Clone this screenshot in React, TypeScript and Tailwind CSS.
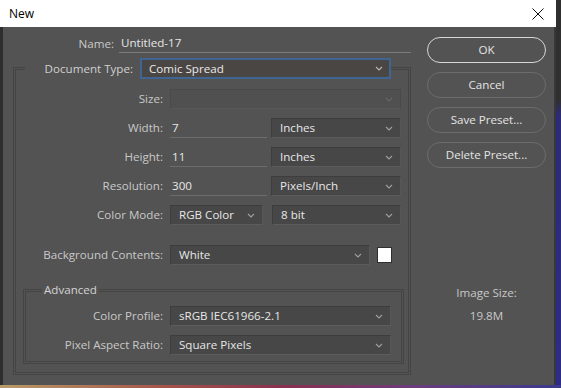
import React from "react";

function Chevron({ c = "#a0a0a0" }: { c?: string }) {
  return (
    <svg width="8" height="5" viewBox="0 0 8 5" className="shrink-0">
      <path d="M1 1 L4 4 L7 1" fill="none" stroke={c} strokeWidth="1.1" />
    </svg>
  );
}

function Select({ value, cls }: { value: string; cls: string }) {
  return (
    <div
      className={`flex h-[20px] items-center justify-between border border-[#3d3d3d] border-b-[#5c5c5c] border-r-[#575757] bg-[#474747] pl-[8px] pr-[7px] text-[#e6e6e6] ${cls}`}
    >
      <span className="whitespace-nowrap leading-none">{value}</span>
      <Chevron />
    </div>
  );
}

function Label({ text, cls }: { text: string; cls: string }) {
  return <span className={`shrink-0 whitespace-nowrap text-right text-[#c8c8c8] ${cls}`}>{text}</span>;
}

function Btn({ text, def }: { text: string; def?: boolean }) {
  return (
    <div
      className={`flex h-[26px] w-[119px] items-center justify-center rounded-full text-[#e4e4e4] ${
        def ? "border-[1.5px] border-[#d6d6d6]" : "border border-[#6c6c6c]"
      }`}
    >
      {text}
    </div>
  );
}

export default function App() {
  return (
    <div className="flex h-[388px] w-[561px] flex-col overflow-hidden font-['Open_Sans',sans-serif] text-[11.6px] leading-[16px]">
      <div className="flex h-[385px]">
        <div className="flex w-[556px] flex-col">
          {/* title bar */}
          <div className="flex h-[27px] items-center justify-between bg-white pl-[9px] pr-[12px] text-black">
            <span className="text-[12px]">New</span>
            <svg width="12" height="12" viewBox="0 0 12 12">
              <path d="M0.5 0.5 L11.5 11.5 M11.5 0.5 L0.5 11.5" stroke="#111" strokeWidth="1" />
            </svg>
          </div>
          {/* body */}
          <div className="flex flex-1 border-l-[3px] border-r-[2px] border-l-[#2e2e2e] border-r-[#383838] bg-[#535353]">
            {/* left column */}
            <div className="flex w-[408px] flex-col pt-[7px]">
              <div className="flex h-[19px] items-center gap-[5px]">
                <Label text="Name:" cls="w-[111px]" />
                <div className="flex h-[19px] w-[293px] items-center border-b border-[#7c7c7c] pl-[2px] text-[#e6e6e6]">
                  Untitled-17
                </div>
              </div>
              <fieldset className="ml-[10px] mt-[5px] w-[398px] border-[3px] border-double border-[#444444] pb-[8px] pt-[10px]">
                <legend className="ml-[9px]">
                  <div className="flex items-center gap-[7px]">
                    <Label text="Document Type:" cls="w-[108px] text-[#d0d0d0]" />
                    <div className="flex h-[21px] w-[251px] items-center justify-between border-2 border-[#3e6593] bg-[#4a4643] pl-[7px] pr-[6px] text-[#eaeaea]">
                      <span className="leading-none">Comic Spread</span>
                      <Chevron c="#b8b8b8" />
                    </div>
                  </div>
                </legend>
                <div className="flex flex-col gap-[9px]">
                  <div className="flex h-[20px] items-center gap-[7px]">
                    <Label text="Size:" cls="w-[147px] text-[#7e7e7e]" />
                    <div className="flex h-[20px] w-[231px] items-center justify-end border border-[#4a4a4a] border-b-[#585858] bg-[#505050] pr-[7px]">
                      <Chevron c="#666666" />
                    </div>
                  </div>
                  {[
                    ["Width:", "7", "Inches"],
                    ["Height:", "11", "Inches"],
                    ["Resolution:", "300", "Pixels/Inch"],
                  ].map(([l, v, u]) => (
                    <div key={l} className="flex h-[20px] items-center gap-[7px]">
                      <Label text={l} cls="w-[147px]" />
                      <div className="flex h-[20px] w-[97px] items-center border-b border-[#6c6c6c] pl-[2px] text-[#e8e8e8]">
                        {v}
                      </div>
                      <Select value={u} cls="ml-[-3px] w-[130px]" />
                    </div>
                  ))}
                  <div className="flex h-[20px] items-center gap-[7px]">
                    <Label text="Color Mode:" cls="w-[147px]" />
                    <Select value="RGB Color" cls="w-[93px]" />
                    <Select value="8 bit" cls="ml-[2px] w-[129px]" />
                  </div>
                </div>
                <div className="mt-[20px] flex h-[20px] items-center gap-[7px]">
                  <Label text="Background Contents:" cls="w-[147px]" />
                  <Select value="White" cls="w-[200px]" />
                  <div className="h-[16px] w-[15px] border border-[#2f2f2f] bg-white" />
                </div>
                <fieldset className="ml-[7px] mt-[17px] w-[381px] border-[3px] border-double border-[#444444] pb-[6px] pt-[8px]">
                  <legend className="ml-[16px] px-[2px] text-[#d4d4d4]">Advanced</legend>
                  <div className="flex flex-col gap-[9px]">
                    <div className="flex h-[20px] items-center gap-[7px]">
                      <Label text="Color Profile:" cls="w-[137px]" />
                      <Select value="sRGB IEC61966-2.1" cls="w-[221px]" />
                    </div>
                    <div className="flex h-[20px] items-center gap-[7px]">
                      <Label text="Pixel Aspect Ratio:" cls="w-[137px]" />
                      <Select value="Square Pixels" cls="w-[221px]" />
                    </div>
                  </div>
                </fieldset>
              </fieldset>
            </div>
            {/* right column */}
            <div className="ml-[16px] flex w-[119px] flex-col pt-[10px]">
              <div className="flex flex-col gap-[9px]">
                <Btn text="OK" def />
                <Btn text="Cancel" />
                <Btn text="Save Preset..." />
                <Btn text="Delete Preset..." />
              </div>
              <div className="mt-[117px] text-center text-[#c8c8c8]">Image Size:</div>
              <div className="mt-[7px] text-center text-[#c8c8c8]">19.8M</div>
            </div>
          </div>
        </div>
        <div className="w-[5px] bg-[linear-gradient(180deg,#2f2f2f_0%,#2f2f2f_26%,#2b2b78_30%,#2c2c88_100%)]" />
      </div>
      <div className="h-[3px] bg-[linear-gradient(90deg,#b89c68_0%,#a6524a_30%,#8c3050_50%,#6a3c7e_75%,#3a3a8c_100%)]" />
    </div>
  );
}
